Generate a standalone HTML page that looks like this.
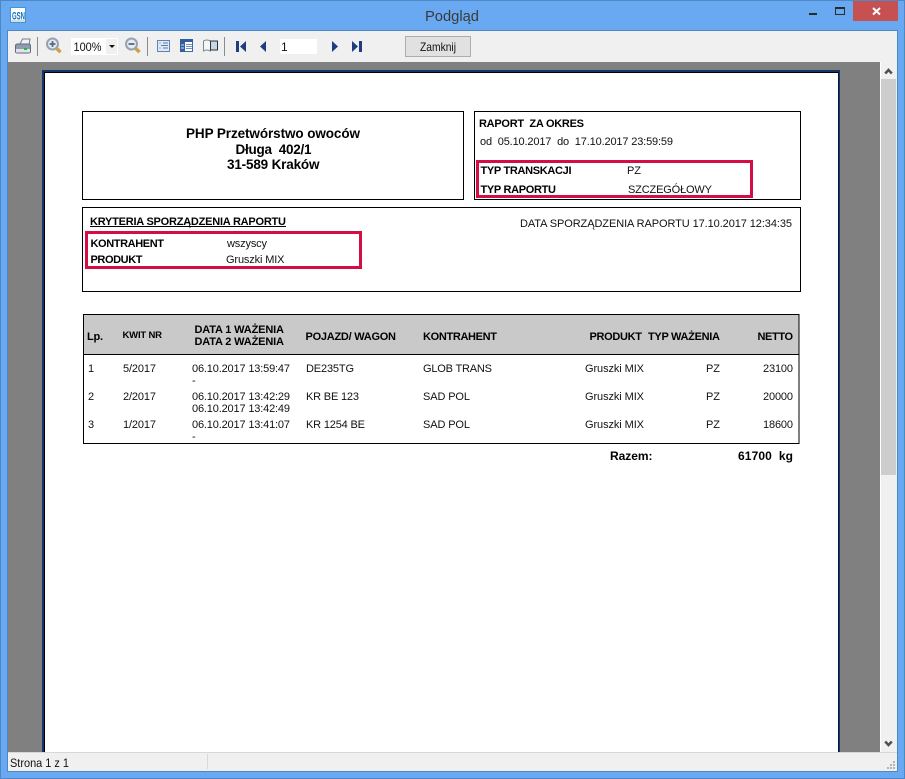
<!DOCTYPE html>
<html lang="pl"><head><meta charset="utf-8"><title>Podgląd</title>
<style>
html,body{margin:0;padding:0;width:905px;height:779px;overflow:hidden;background:#69a9f2}
svg{display:block;position:absolute;left:0;top:0}
text{font-family:"Liberation Sans",sans-serif;fill:#000;white-space:pre}
.b{font-weight:bold}
.r{fill:#111}
</style></head><body>
<svg width="905" height="779" viewBox="0 0 905 779" xmlns="http://www.w3.org/2000/svg">
<!-- window -->
<rect x="0.5" y="0.5" width="904" height="778" fill="#69a9f2" stroke="#4f86c6"/>
<rect x="7.5" y="30.5" width="890" height="741" fill="#f0f0f0" stroke="#4f86c6"/>
<text x="425" y="21" font-size="15" textLength="54" lengthAdjust="spacingAndGlyphs" style="fill:#3a3a3a">Podgląd</text>
<!-- GSN icon -->
<rect x="10.500" y="7.500" width="15" height="15" fill="#fff" stroke="#3d97d3"/>
<rect x="11" y="20" width="14" height="2" fill="#d5dde3"/>
<text x="12" y="19.500" font-size="11" class="b" textLength="13" lengthAdjust="spacingAndGlyphs" style="fill:#0f6fb8">GSN</text>
<!-- caption buttons -->
<rect x="853" y="1" width="45" height="20" fill="#c75050"/>
<path d="M873 8l7 6.500M880 8l-7 6.500" stroke="#fff" stroke-width="2"/>
<rect x="809" y="13" width="8" height="2" fill="#2a2a2a"/>
<rect x="835.500" y="7.500" width="9" height="7" fill="none" stroke="#2a2a2a"/><rect x="835" y="7" width="10" height="2" fill="#2a2a2a"/>
<!-- gray area -->
<rect x="8" y="62" width="872" height="690" fill="#808080"/>
<!-- page -->
<rect x="42" y="70" width="798" height="682" fill="#14346e"/>
<rect x="44" y="72" width="794.500" height="680" fill="#000"/>
<rect x="45" y="73" width="793" height="679" fill="#fff"/>
<!-- scrollbar -->
<rect x="880" y="62" width="17" height="690" fill="#f0f0f0"/>
<rect x="880" y="62" width="1" height="690" fill="#fff"/>
<rect x="881" y="79" width="15" height="396" fill="#cdcdcd"/>
<path d="M885.200 73.500l3.300-3.500 3.300 3.500" fill="none" stroke="#505050" stroke-width="2.500"/>
<path d="M885.200 741.500l3.300 3.500 3.300-3.500" fill="none" stroke="#505050" stroke-width="2.500"/>
<!-- status bar -->
<rect x="8" y="752" width="889" height="1" fill="#d7d7d7"/>
<rect x="8" y="753" width="889" height="18" fill="#f0f0f0"/>
<rect x="207" y="754" width="1" height="15" fill="#d9d9d9"/>
<text x="10" y="767" font-size="12" textLength="59" lengthAdjust="spacingAndGlyphs" style="fill:#111">Strona 1 z 1</text>
<path fill="#b5b5b5" d="M893 761h2v2h-2zM890 764h2v2h-2zM893 764h2v2h-2zM887 767h2v2h-2zM890 767h2v2h-2zM893 767h2v2h-2z"/>
<!-- toolbar -->
<g>
<rect x="37" y="37" width="1" height="19" fill="#8a8a8a"/>
<rect x="147" y="37" width="1" height="19" fill="#8a8a8a"/>
<rect x="224" y="37" width="1" height="19" fill="#8a8a8a"/>
<!-- printer -->
<path d="M19.500 45l3-6h7.500l-1 6z" fill="#eef1f5" stroke="#76818e"/>
<path d="M15.500 46q0-2 2-2h11q2 0 2 2v5.500q0 1.500-2 1.500h-11q-2 0-2-1.500z" fill="#8f9cae" stroke="#5f6b79"/>
<rect x="16" y="49" width="14" height="3.500" fill="#dfe4ea"/>
<rect x="24" y="48" width="3" height="2" fill="#19c02c"/>
<!-- zoom + -->
<circle cx="52.500" cy="44" r="5.500" fill="#e6ebf1" stroke="#98a2ad" stroke-width="2"/>
<path d="M49.500 44h6M52.500 41v6" stroke="#52688a" stroke-width="1.800"/>
<path d="M56.800 48.500l3.700 3.700" stroke="#c9a24a" stroke-width="3.500"/>
<!-- combo -->
<rect x="71" y="38" width="47" height="17" fill="#fff"/>
<rect x="106" y="39" width="11" height="15" fill="#f0f0f0"/>
<path d="M109 45h6l-3 3z" fill="#111"/>
<text x="73.500" y="51" font-size="12" textLength="28" lengthAdjust="spacingAndGlyphs" style="fill:#111">100%</text>
<!-- zoom - -->
<circle cx="131.500" cy="44" r="5.500" fill="#e6ebf1" stroke="#98a2ad" stroke-width="2"/>
<path d="M128.500 44h6" stroke="#52688a" stroke-width="1.800"/>
<path d="M135.800 48.500l3.700 3.700" stroke="#c9a24a" stroke-width="3.500"/>
<!-- page icons -->
<rect x="157.500" y="40.500" width="12" height="11" fill="#dfe8f3" stroke="#5c84b5"/>
<path d="M163 43h5M161 45.500h7M163 48h5M159.500 43h1M159.500 48h1" stroke="#5a7fae"/>
<rect x="180.500" y="39.500" width="12" height="12" fill="#fff" stroke="#3a6cab"/>
<rect x="180" y="39" width="13" height="3" fill="#2f5f9f"/>
<rect x="180" y="39" width="5" height="13" fill="#2f5f9f"/>
<path d="M181 45h3M181 48h3" stroke="#dbe6f3"/>
<path d="M186 44.500h6M186 46.500h6M186 48.500h6" stroke="#6d94c4"/>
<path d="M203.500 41q3-2 7 0v10q-4-2-7 0z" fill="#f4f6f8" stroke="#7d8790"/>
<path d="M210.500 41h7v9h-7z" fill="#c6d7ea" stroke="#333"/>
<!-- nav -->
<g fill="#1d3f7f">
<rect x="236" y="41" width="3" height="11"/><path d="M246 41v11l-6-5.500z"/>
<path d="M266 41v11l-6-5.500z"/>
<path d="M332 41v11l6-5.500z"/>
<path d="M352 41v11l6-5.500z"/><rect x="359" y="41" width="3" height="11"/>
</g>
<rect x="280" y="39" width="37" height="15" fill="#fff"/>
<text x="281" y="51" font-size="12" style="fill:#111">1</text>
<!-- button -->
<rect x="405.500" y="36.500" width="65" height="20" fill="#e1e1e1" stroke="#adadad"/>
<text x="420" y="51" font-size="12" textLength="36" lengthAdjust="spacingAndGlyphs" style="fill:#111">Zamknij</text>
</g>
<!-- boxes -->
<g fill="none" stroke="#000">
<rect x="82.500" y="111.500" width="381" height="88"/>
<rect x="474.500" y="111.500" width="326" height="88"/>
<rect x="82.500" y="207.500" width="718" height="84"/>
</g>
<text class="b" x="186" y="138" font-size="13.500" textLength="174">PHP Przetwórstwo owoców</text>
<text class="b" x="235.500" y="154" font-size="13.500" textLength="76">Długa  402/1</text>
<text class="b" x="227" y="169" font-size="13.500" textLength="92.500">31-589 Kraków</text>
<text class="b" x="90" y="225" font-size="11" textLength="196">KRYTERIA SPORZĄDZENIA RAPORTU</text>
<rect x="90" y="226" width="196" height="1" fill="#000"/>
<text class="b" x="90.500" y="247" font-size="11" textLength="73.500">KONTRAHENT</text>
<text class="r" x="227" y="247" font-size="11" textLength="40">wszyscy</text>
<text class="b" x="90.500" y="263" font-size="11" textLength="52">PRODUKT</text>
<text class="r" x="226" y="263" font-size="11" textLength="58.500">Gruszki MIX</text>
<text class="b" x="479" y="127" font-size="11" textLength="105">RAPORT  ZA OKRES</text>
<text class="r" x="480" y="145" font-size="11" textLength="193">od  05.10.2017  do  17.10.2017 23:59:59</text>
<text class="b" x="480.500" y="174" font-size="11" textLength="91">TYP TRANSKACJI</text>
<text class="r" x="627" y="174" font-size="11" textLength="14">PZ</text>
<text class="b" x="480.500" y="193" font-size="11" textLength="75.500">TYP RAPORTU</text>
<text class="r" x="628" y="193" font-size="11" textLength="84">SZCZEGÓŁOWY</text>
<text class="r" x="520" y="227" font-size="11" textLength="272">DATA SPORZĄDZENIA RAPORTU 17.10.2017 12:34:35</text>
<!-- red highlights -->
<g fill="none" stroke="#d40d45" stroke-width="3">
<rect x="86.500" y="232.500" width="274" height="35"/>
<rect x="477.500" y="161.500" width="274" height="35"/>
</g>
<!-- table -->
<rect x="83.500" y="314.500" width="715.500" height="129" fill="#fff" stroke="#000"/>
<rect x="84" y="315" width="714.500" height="39" fill="#c9c9c9"/>
<rect x="84" y="354" width="714.500" height="1" fill="#000"/>
<text class="b" x="87" y="340" font-size="11" textLength="16">Lp.</text>
<text class="b" x="122.500" y="338" font-size="9.500" textLength="39.500">KWIT NR</text>
<text class="b" x="194.500" y="333" font-size="11" textLength="89.500">DATA 1 WAŻENIA</text>
<text class="b" x="194.500" y="345" font-size="11" textLength="89.500">DATA 2 WAŻENIA</text>
<text class="b" x="305.500" y="340" font-size="11" textLength="90.500">POJAZD/ WAGON</text>
<text class="b" x="423" y="340" font-size="11" textLength="74">KONTRAHENT</text>
<text class="b" x="589.500" y="340" font-size="11" textLength="52.500">PRODUKT</text>
<text class="b" x="648" y="340" font-size="11" textLength="72">TYP WAŻENIA</text>
<text class="b" x="757.500" y="340" font-size="11" textLength="35.500">NETTO</text>
<g font-size="11">
<text class="r" x="88" y="372" textLength="5.500">1</text>
<text class="r" x="123" y="372" textLength="33">5/2017</text>
<text class="r" x="192" y="372" textLength="98">06.10.2017 13:59:47</text>
<text class="r" x="192" y="384">-</text>
<text class="r" x="306" y="372" textLength="48">DE235TG</text>
<text class="r" x="423" y="372" textLength="69">GLOB TRANS</text>
<text class="r" x="585" y="372" textLength="59">Gruszki MIX</text>
<text class="r" x="706" y="372" textLength="14">PZ</text>
<text class="r" x="763" y="372" textLength="30">23100</text>
<text class="r" x="88" y="400" textLength="6">2</text>
<text class="r" x="123" y="400" textLength="33">2/2017</text>
<text class="r" x="192" y="400" textLength="98">06.10.2017 13:42:29</text>
<text class="r" x="192" y="412" textLength="98">06.10.2017 13:42:49</text>
<text class="r" x="306" y="400" textLength="53">KR BE 123</text>
<text class="r" x="423" y="400" textLength="47">SAD POL</text>
<text class="r" x="585" y="400" textLength="59">Gruszki MIX</text>
<text class="r" x="706" y="400" textLength="14">PZ</text>
<text class="r" x="763" y="400" textLength="30">20000</text>
<text class="r" x="88" y="428" textLength="6">3</text>
<text class="r" x="123" y="428" textLength="33">1/2017</text>
<text class="r" x="192" y="428" textLength="98">06.10.2017 13:41:07</text>
<text class="r" x="192" y="440">-</text>
<text class="r" x="306" y="428" textLength="59">KR 1254 BE</text>
<text class="r" x="423" y="428" textLength="47">SAD POL</text>
<text class="r" x="585" y="428" textLength="59">Gruszki MIX</text>
<text class="r" x="706" y="428" textLength="14">PZ</text>
<text class="r" x="763" y="428" textLength="30">18600</text>
</g>
<text class="b" x="610" y="460" font-size="12" textLength="42.500">Razem:</text>
<text class="b" x="738" y="460" font-size="12" textLength="55">61700  kg</text>
</svg>
</body></html>
